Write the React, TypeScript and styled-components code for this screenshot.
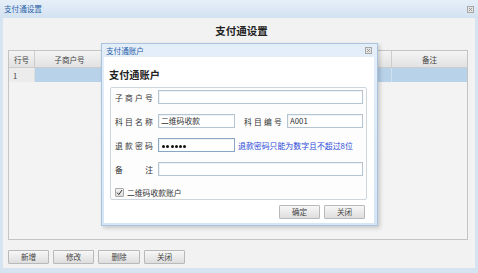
import styled, { createGlobalStyle } from 'styled-components';

const GlobalStyle = createGlobalStyle`
  html, body {
    margin: 0;
    padding: 0;
    background: #d7e4f1;
  }
  body {
    font-family: "Noto Sans CJK SC", "Noto Sans", sans-serif;
    color: #333;
  }
  * {
    box-sizing: border-box;
  }
`;

const Window = styled.div`
  position: relative;
  width: 478px;
  height: 273px;
  display: flex;
  flex-direction: column;
  background: #d6e4f2;
  overflow: hidden;
`;

const TitleBar = styled.div<{ $h: number }>`
  height: ${(p) => p.$h}px;
  flex-shrink: 0;
  display: flex;
  align-items: center;
  justify-content: space-between;
  padding: 0 4px 0 4px;
  background: linear-gradient(180deg, #e6eff8 0%, #d3e2f1 100%);
`;

const TitleText = styled.span`
  font-size: 7.6px;
  line-height: 1;
  color: #2b62a8;
`;

const Body = styled.div`
  flex: 1;
  margin: 0 3px 5px 3px;
  background: #f2f2f2;
  display: flex;
  flex-direction: column;
  padding: 5px 0 4px 5px;
`;

const PageHeading = styled.h1`
  margin: 0;
  height: 15px;
  line-height: 15px;
  text-align: center;
  font-size: 10.5px;
  font-weight: bold;
  color: #222;
`;

const Grid = styled.div`
  margin-top: 12px;
  width: 460px;
  height: 190px;
  border: 1px solid #c4c4c4;
  background: #f3f3f3;
  display: flex;
  flex-direction: column;
`;

const GridRow = styled.div<{ $head?: boolean }>`
  display: grid;
  grid-template-columns: 26px 70px 100px 86px 101px 1fr;
  height: ${(p) => (p.$head ? 17 : 14)}px;
  background: ${(p) =>
    p.$head ? 'linear-gradient(180deg, #f4f4f4 0%, #e2e2e2 100%)' : 'transparent'};
  border-bottom: ${(p) => (p.$head ? '1px solid #cdcdcd' : 'none')};
`;

const Cell = styled.div<{ $head?: boolean; $sel?: boolean; $num?: boolean }>`
  display: flex;
  align-items: center;
  justify-content: ${(p) => (p.$num ? 'flex-start' : 'center')};
  padding-left: ${(p) => (p.$num ? '4px' : '0')};
  font-size: 7.6px;
  color: #444;
  border-right: 1px solid ${(p) => (p.$head ? '#cdcdcd' : p.$sel ? '#cfe0ef' : '#dedede')};
  background: ${(p) => (p.$sel ? '#b8d2ea' : p.$num && !p.$head ? '#ececec' : 'transparent')};
  &:last-child {
    border-right: none;
  }
`;

const ButtonBar = styled.div`
  margin-top: 10px;
  display: flex;
  gap: 4px;
`;

const Button = styled.button<{ $w?: number }>`
  width: ${(p) => p.$w ?? 41}px;
  height: 14px;
  padding: 0;
  border: 1px solid #b9b9b9;
  border-radius: 1px;
  background: linear-gradient(180deg, #f7f7f7 0%, #dedede 100%);
  font-family: inherit;
  font-size: 7.6px;
  line-height: 1;
  color: #444;
`;

const Dialog = styled.div`
  position: absolute;
  left: 101px;
  top: 43px;
  width: 277px;
  height: 183px;
  border: 1px solid #a9c4df;
  background: linear-gradient(180deg, #e3eef9 0%, #d5e5f4 100%);
  box-shadow: 2px 2px 4px rgba(0, 0, 0, 0.18);
  display: flex;
  flex-direction: column;
`;

const DialogTitle = styled(TitleBar)`
  padding: 0 5px 0 4px;
  background: transparent;
`;

const DialogBody = styled.div`
  flex: 1;
  margin: 0 3px 2px 2px;
  background: #fff;
  display: flex;
  flex-direction: column;
  padding: 9px 8px 0 6px;
`;

const DialogHeading = styled.h2`
  margin: 0 0 0 -1px;
  height: 17px;
  line-height: 17px;
  font-size: 10.2px;
  font-weight: bold;
  color: #222;
`;

const Fieldset = styled.div`
  margin-top: 4px;
  width: 257px;
  height: 113px;
  border: 1px solid #cdd6dc;
  border-radius: 2px;
  background: #fdfdfd;
  padding: 2px 0 0 4px;
  display: flex;
  flex-direction: column;
  gap: 10px;
`;

const FormRow = styled.div`
  display: flex;
  align-items: center;
  height: 14px;
`;

const Label = styled.span<{ $lead?: number }>`
  width: 40px;
  margin-left: ${(p) => p.$lead ?? 0}px;
  margin-right: 3px;
  font-size: 7.8px;
  letter-spacing: 2.2px;
  white-space: nowrap;
  color: #333;
`;

const SpacedLabel = styled(Label)`
  display: flex;
  justify-content: space-between;
  letter-spacing: 0;
  padding-right: 2px;
`;

const Input = styled.div<{ $w: number; $dark?: boolean }>`
  width: ${(p) => p.$w}px;
  height: 14px;
  border: 1px solid ${(p) => (p.$dark ? '#87a7c4' : '#b4c4d0')};
  background: #fff;
  box-shadow: inset 1px 1px 0 #eef2f5;
  font-size: 7.8px;
  line-height: 12px;
  padding-left: 2px;
  color: #333;
  white-space: nowrap;
  overflow: hidden;
`;

const Dots = styled.span`
  display: inline-flex;
  align-items: center;
  gap: 1.3px;
  height: 12px;
  padding-left: 1px;
`;

const Dot = styled.span`
  width: 3px;
  height: 3px;
  border-radius: 50%;
  background: #111;
`;

const Hint = styled.span`
  margin-left: 3px;
  font-size: 7.9px;
  color: #2a48d8;
  white-space: nowrap;
`;

const CheckRow = styled(FormRow)`
  margin-top: -1px;
  gap: 3px;
`;

const CheckBox = styled.span`
  width: 9px;
  height: 9px;
  border: 1px solid #a9a9a9;
  border-radius: 1px;
  background: linear-gradient(180deg, #f4f4f4, #dcdcdc);
  display: flex;
  align-items: center;
  justify-content: center;
`;

const CheckLabel = styled.span`
  font-size: 7.8px;
  color: #333;
`;

const DialogButtons = styled.div`
  margin-top: 5px;
  display: flex;
  justify-content: flex-end;
  gap: 4px;
  padding-right: 1px;
`;

const CloseIcon = () => (
  <svg width="7" height="7" viewBox="0 0 7 7">
    <rect x="0.5" y="0.5" width="6" height="6" fill="#e4e4e4" stroke="#a7a7a7" />
    <path d="M2 2 L5 5 M5 2 L2 5" stroke="#8a8a8a" strokeWidth="0.8" />
  </svg>
);

const columns = ['行号', '子商户号', '科目名称', '科目编号', '二维码收款账户', '备注'];

const App = () => {
  return (
    <>
      <GlobalStyle />
      <Window>
        <TitleBar $h={18}>
          <TitleText>支付通设置</TitleText>
          <CloseIcon />
        </TitleBar>
        <Body>
          <PageHeading>支付通设置</PageHeading>
          <Grid>
            <GridRow $head>
              {columns.map((c) => (
                <Cell key={c} $head>
                  {c}
                </Cell>
              ))}
            </GridRow>
            <GridRow>
              <Cell $num>1</Cell>
              {columns.slice(1).map((c) => (
                <Cell key={c} $sel />
              ))}
            </GridRow>
          </Grid>
          <ButtonBar>
            <Button>新增</Button>
            <Button>修改</Button>
            <Button $w={42}>删除</Button>
            <Button>关闭</Button>
          </ButtonBar>
        </Body>

        <Dialog>
          <DialogTitle $h={13}>
            <TitleText>支付通账户</TitleText>
            <CloseIcon />
          </DialogTitle>
          <DialogBody>
            <DialogHeading>支付通账户</DialogHeading>
            <Fieldset>
              <FormRow>
                <Label>子商户号</Label>
                <Input $w={205} />
              </FormRow>
              <FormRow>
                <Label>科目名称</Label>
                <Input $w={77}>二维码收款</Input>
                <Label $lead={9}>科目编号</Label>
                <Input $w={76}>A001</Input>
              </FormRow>
              <FormRow>
                <Label>退款密码</Label>
                <Input $w={77} $dark>
                  <Dots>
                    {[0, 1, 2, 3, 4, 5].map((i) => (
                      <Dot key={i} />
                    ))}
                  </Dots>
                </Input>
                <Hint>退款密码只能为数字且不超过8位</Hint>
              </FormRow>
              <FormRow>
                <SpacedLabel>
                  <span>备</span>
                  <span>注</span>
                </SpacedLabel>
                <Input $w={205} />
              </FormRow>
              <CheckRow>
                <CheckBox>
                  <svg width="7" height="7" viewBox="0 0 7 7">
                    <path d="M1 3.6 L2.8 5.6 L6 1" fill="none" stroke="#333" strokeWidth="1" />
                  </svg>
                </CheckBox>
                <CheckLabel>二维码收款账户</CheckLabel>
              </CheckRow>
            </Fieldset>
            <DialogButtons>
              <Button>确定</Button>
              <Button>关闭</Button>
            </DialogButtons>
          </DialogBody>
        </Dialog>
      </Window>
    </>
  );
};

export default App;
